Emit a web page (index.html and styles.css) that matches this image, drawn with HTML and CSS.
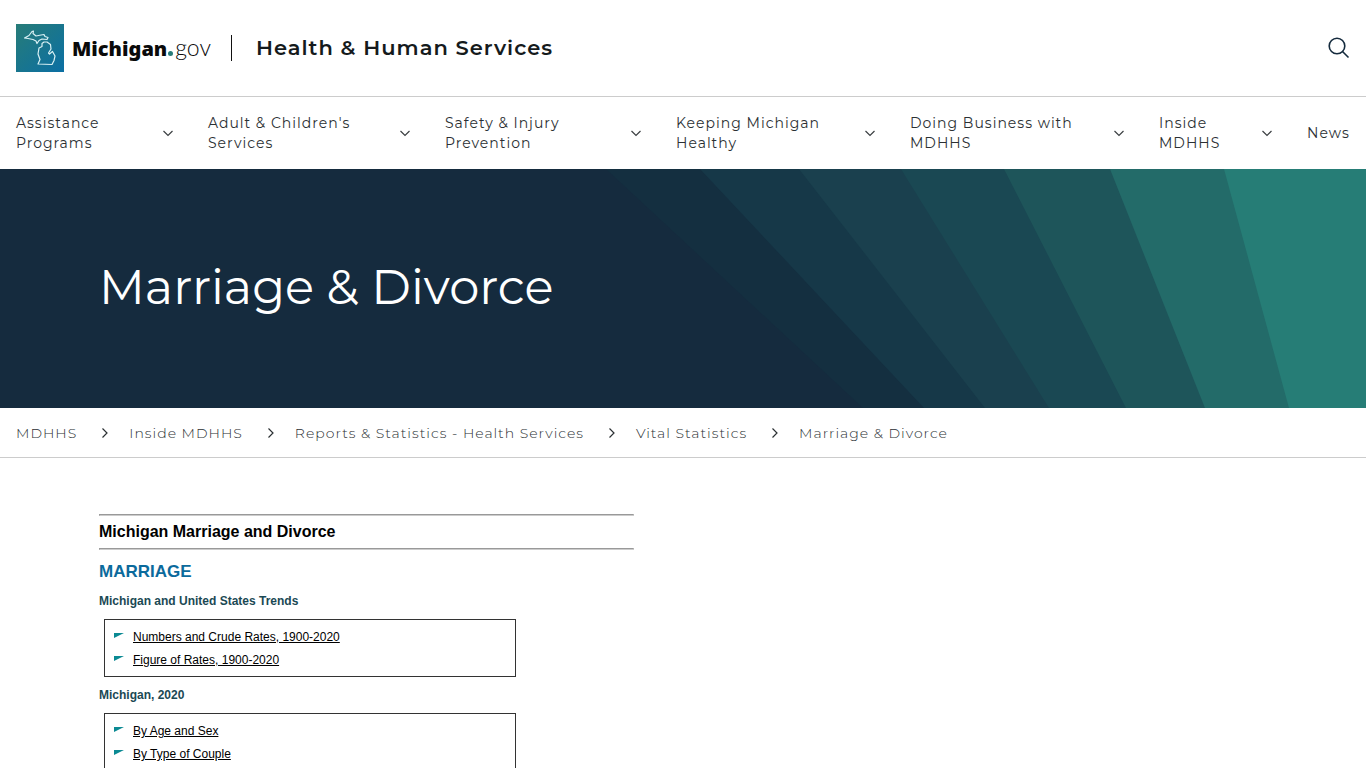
FILE: index.html
```
<!DOCTYPE html>
<html lang="en">
<head>
<meta charset="utf-8">
<meta name="viewport" content="width=device-width, initial-scale=1">
<title>Marriage &amp; Divorce</title>
<link rel="stylesheet" href="styles.css">
</head>
<body>
<svg class="sprite" aria-hidden="true">
  <symbol id="down" viewBox="0 0 12 8"><path d="M1.500 2 6 6.500 10.500 2"/></symbol>
  <symbol id="right" viewBox="0 0 8 12"><path d="M1.500 1.500 6 6 1.500 10.500"/></symbol>
  <symbol id="flag" viewBox="0 0 10 5"><path d="M0 0H10L0 5Z"/></symbol>
</svg>
<header class="header">
  <a class="brand" href="#" aria-label="Michigan.gov">
    <svg class="brand-mark" viewBox="0 0 48 48" aria-hidden="true">
      <defs><linearGradient id="g" x1="0" y1="0" x2="1" y2="1"><stop offset="0" stop-color="#277c78"/><stop offset="1" stop-color="#0b6fa4"/></linearGradient></defs>
      <rect width="48" height="48" fill="url(#g)"/>
      <path class="outline" d="M8.500 14 13 11.500 16 7.500 17.500 7 17 9.500 20 12 25 11 28 10.500 29 12.500 32 13.500 31 15.500 26 15 23 16.500 21 19.500 20 17 17 15.500 12 14.500ZM28 18 31 18 34.500 20.500 35 25 32.500 29 33.500 30 36.500 27.500 39 32 38 36.500 36 40.500 22 40 24 35.500 22 30 23 24 26 22.500 26 19.500Z"/>
    </svg>
    <span class="wordmark"><b>Michigan</b><i class="dot"></i><span class="gov">gov</span></span>
  </a>
  <a class="agency" href="#">Health &amp; Human Services</a>
  <button class="search" type="button" aria-label="Search">
    <svg viewBox="0 0 22 22" aria-hidden="true"><circle cx="9" cy="9" r="7.800"/><path d="M14.500 14.500 20.500 20.500"/></svg>
  </button>
</header>
<nav class="nav" aria-label="Main">
  <a href="#"><span>Assistance<br>Programs</span><svg><use href="#down"/></svg></a>
  <a href="#"><span>Adult &amp; Children's<br>Services</span><svg><use href="#down"/></svg></a>
  <a href="#"><span>Safety &amp; Injury<br>Prevention</span><svg><use href="#down"/></svg></a>
  <a href="#"><span>Keeping Michigan<br>Healthy</span><svg><use href="#down"/></svg></a>
  <a href="#"><span>Doing Business with<br>MDHHS</span><svg><use href="#down"/></svg></a>
  <a href="#"><span>Inside<br>MDHHS</span><svg><use href="#down"/></svg></a>
  <a href="#"><span>News</span></a>
</nav>
<section class="hero">
  <svg class="rays" viewBox="0 0 1366 239" preserveAspectRatio="none" aria-hidden="true">
    <path fill="#142f40" d="M606 0H1366V239H863Z"/>
    <path fill="#163848" d="M700 0H1366V239H924Z"/>
    <path fill="#1a404e" d="M799 0H1366V239H985Z"/>
    <path fill="#1a4853" d="M901 0H1366V239H1049Z"/>
    <path fill="#1e555a" d="M1004 0H1366V239H1126Z"/>
    <path fill="#236b69" d="M1110 0H1366V239H1205Z"/>
    <path fill="#267d76" d="M1224 0H1366V239H1289Z"/>
  </svg>
  <h1>Marriage &amp; Divorce</h1>
</section>
<nav class="crumbs" aria-label="Breadcrumb">
  <a href="#">MDHHS</a><svg><use href="#right"/></svg>
  <a href="#">Inside MDHHS</a><svg><use href="#right"/></svg>
  <a href="#">Reports &amp; Statistics - Health Services</a><svg><use href="#right"/></svg>
  <a href="#">Vital Statistics</a><svg><use href="#right"/></svg>
  <a href="#">Marriage &amp; Divorce</a>
</nav>
<main class="content">
  <hr>
  <h2 class="title">Michigan Marriage and Divorce</h2>
  <hr>
  <h3 class="topic">MARRIAGE</h3>
  <h4 class="group">Michigan and United States Trends</h4>
  <ul class="links">
    <li><svg><use href="#flag"/></svg><a href="#">Numbers and Crude Rates, 1900-2020</a></li>
    <li><svg><use href="#flag"/></svg><a href="#">Figure of Rates, 1900-2020</a></li>
  </ul>
  <h4 class="group">Michigan, 2020</h4>
  <ul class="links">
    <li><svg><use href="#flag"/></svg><a href="#">By Age and Sex</a></li>
    <li><svg><use href="#flag"/></svg><a href="#">By Type of Couple</a></li>
  </ul>
</main>
</body>
</html>
```
FILE: styles.css
```
* { box-sizing: border-box; }
body { margin: 0; background: #fff; color: #2b3033; font-family: Montserrat, Inter, sans-serif; }
a { color: inherit; text-decoration: none; }
.sprite { display: none; }

.header { display: flex; align-items: center; padding: 24px 16px; border-bottom: 1px solid #ccc; }
.brand { display: flex; align-items: center; gap: 8px; padding-right: 20px; }
.brand-mark { display: block; width: 48px; height: 48px; }
.outline { fill: none; stroke: #d8f0f4; stroke-width: 1.2; stroke-linejoin: round; }
.wordmark { display: flex; align-items: baseline; color: #0a0a0a; font-family: "Noto Sans", sans-serif; font-size: 20px; line-height: 28px; }
.wordmark b { font-weight: 900; }
.dot { width: 5px; height: 5px; margin: 0 2px 0 1px; border-radius: 50%; background: #277c78; }
.gov { font-family: Lato, sans-serif; font-weight: 300; font-size: 23px; }
.agency { padding-left: 24px; border-left: 1px solid #111; color: #151a1c; font-size: 21px; font-weight: 600; line-height: 26px; letter-spacing: 1px; }
.search { margin-left: auto; padding: 0; border: 0; background: none; cursor: pointer; }
.search svg { display: block; width: 22px; height: 22px; fill: none; stroke: #152b3e; stroke-width: 1.6; }

.nav { display: grid; grid-template-columns: 192fr 237fr 231fr 234fr 249fr 148fr 43fr; align-items: center; padding: 16px; font-size: 14px; line-height: 20px; letter-spacing: 1px; }
.nav a { display: flex; align-items: center; justify-content: space-between; padding-right: 34px; white-space: nowrap; }
.nav a:last-child { padding-right: 0; }
.nav svg { width: 12px; height: 8px; fill: none; stroke: #3b3f42; stroke-width: 1.2; }

.hero { position: relative; display: flex; align-items: center; min-height: 239px; padding: 0 99px 4px; background: #152b3e; }
.rays { position: absolute; inset: 0; width: 100%; height: 100%; }
.hero h1 { position: relative; margin: 0; color: #fff; font-size: 48px; font-weight: 400; line-height: 60px; }

.crumbs { display: flex; align-items: center; padding: 15px 16px 14px; border-bottom: 1px solid #ccc; font-size: 14px; font-weight: 300; line-height: 20px; letter-spacing: 1px; white-space: nowrap; }
.crumbs svg { width: 8px; height: 12px; margin: 0 20px 0 24px; fill: none; stroke: #2b3033; stroke-width: 1.2; }

.content { padding: 56px 99px; font-family: "Liberation Sans", Arial, sans-serif; }
.content hr { max-width: 535px; margin: 0; border: 1px solid; border-color: #999 #ccc #ccc #999; }
.title { margin: 6px 0; color: #000; font-size: 16px; line-height: 20px; }
.topic { margin: 12px 0 11px; color: #0b6a9c; font-size: 17px; line-height: 20px; }
.group { margin: 0 0 10px; color: #1b4954; font-size: 12px; line-height: 16px; }
.links { max-width: 412px; margin: 0 0 10px 5px; padding: 6px 9px 4px; border: 1px solid #333; list-style: none; color: #000; font-size: 12px; line-height: 23px; }
.links li { display: flex; align-items: center; gap: 9px; }
.links li svg { width: 10px; height: 5px; margin-bottom: 4px; fill: #0b8a93; }
.links a { text-decoration: underline; }
```
